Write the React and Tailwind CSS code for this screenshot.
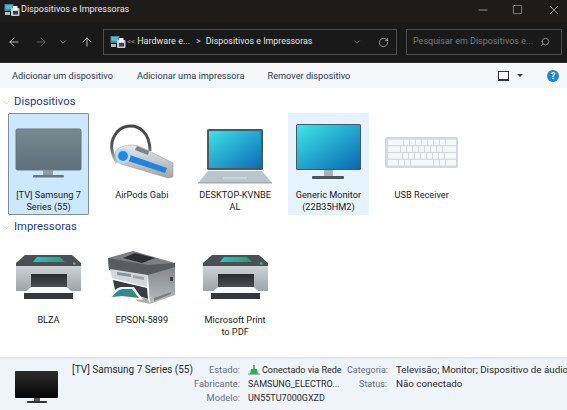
import React from "react";
import { ArrowLeft, ArrowRight, ArrowUp, ChevronDown, RotateCw, Search, Minus, Square, X } from "lucide-react";

const FolderIcon = () => (
  <svg width="16" height="14" viewBox="0 0 16 14" className="shrink-0">
    <rect x="0.5" y="1" width="9" height="7" fill="#5d7f96" />
    <rect x="1.5" y="2" width="7" height="4" fill="#35c4dc" />
    <rect x="7" y="5" width="8.5" height="8" rx="1" fill="#c6ccd2" />
    <rect x="9" y="3" width="4.5" height="4" fill="#f2f4f5" />
    <rect x="9" y="8" width="5" height="3.5" fill="#39424a" />
    <rect x="1" y="9" width="5" height="3" fill="#aeb8bf" />
  </svg>
);

const TvIcon = () => (
  <svg width="79" height="70" viewBox="1 1 79 70">
    <defs>
      <linearGradient id="tvg" x1="0" y1="0" x2="0" y2="1">
        <stop offset="0" stopColor="#7a8991" />
        <stop offset="1" stopColor="#5f707b" />
      </linearGradient>
    </defs>
    <rect x="8" y="16" width="65" height="41" rx="1.5" fill="url(#tvg)" stroke="#66757f" />
    <rect x="35" y="57" width="10" height="5" fill="#8c9aa2" />
    <rect x="25" y="62" width="31" height="2.5" rx="1" fill="#66767f" />
  </svg>
);

const HeadsetIcon = () => (
  <svg width="79" height="70" viewBox="1 1 79 70">
    <defs>
      <linearGradient id="hsb" x1="0" y1="0" x2="0" y2="1">
        <stop offset="0" stopColor="#e8eaec" />
        <stop offset="1" stopColor="#9fa5aa" />
      </linearGradient>
      <linearGradient id="hsa" x1="0" y1="0" x2="0" y2="1">
        <stop offset="0" stopColor="#444444" />
        <stop offset="0.55" stopColor="#555555" />
        <stop offset="1" stopColor="#c8ccd0" />
      </linearGradient>
    </defs>
    <path d="M16 50 C10 40 9 30 14 22 C19 13 33 9 42 18 C47 23 49 30 49 38" fill="none" stroke="url(#hsa)" strokeWidth="3" />
    <path d="M14 42 C14 35 20 33 30 32 C36 32 40 34 44 36 L72 50 L72 64 L67 65 L20 51 C16 49 14 46 14 42 Z" fill="url(#hsb)" stroke="#9aa0a6" strokeWidth="0.6" />
    <path d="M29 42 L66 55 L64 60 L27 48 Z" fill="#1e84e0" />
    <circle cx="22" cy="43" r="7.5" fill="#b9d9f2" />
    <circle cx="22" cy="43" r="5" fill="#1f8ae4" />
    <path d="M36 33 L48 38 L47 42 L34 37 Z" fill="#7d8388" />
  </svg>
);

const LaptopIcon = () => (
  <svg width="79" height="70" viewBox="1 1 79 70">
    <defs>
      <linearGradient id="lpg" x1="0" y1="0" x2="1" y2="1">
        <stop offset="0" stopColor="#3fe0e6" />
        <stop offset="1" stopColor="#0a6cb8" />
      </linearGradient>
    </defs>
    <rect x="12" y="16" width="56" height="41" rx="1.5" fill="#4d5962" />
    <rect x="14" y="18" width="52" height="37" fill="url(#lpg)" />
    <path d="M13 58 H67 L77 70 H3 Z" fill="#bac6ce" />
    <rect x="3" y="69" width="74" height="1.5" fill="#9eabb3" />
    <rect x="28" y="64" width="24" height="2" fill="#cfd7dc" />
  </svg>
);

const MonitorIcon = () => (
  <svg width="79" height="70" viewBox="1 1 79 70">
    <defs>
      <linearGradient id="mng" x1="0" y1="0" x2="1" y2="1">
        <stop offset="0" stopColor="#3fe6e8" />
        <stop offset="1" stopColor="#0867b5" />
      </linearGradient>
    </defs>
    <rect x="8" y="11" width="65" height="46" rx="1.5" fill="#4b5862" />
    <rect x="9" y="12" width="63" height="44" fill="url(#mng)" />
    <rect x="36" y="57" width="9" height="6" fill="#a7b1b7" />
    <rect x="24" y="63" width="32" height="3" rx="1" fill="#4b5862" />
  </svg>
);

const keyRows = [
  [[7, 10], [17, 5], [23, 5], [29, 5], [35, 5], [41, 5], [47, 5], [53, 5], [59, 5], [65, 10]],
  [[7, 12], [20, 5], [26, 5], [32, 5], [38, 5], [44, 5], [50, 5], [56, 5], [62, 13]],
  [[7, 14], [22, 5], [28, 5], [34, 5], [40, 5], [46, 5], [52, 5], [58, 5], [64, 11]],
  [[7, 10], [18, 5], [24, 5], [30, 22], [53, 5], [59, 5], [65, 10]],
];

const KeyboardIcon = () => (
  <svg width="79" height="70" viewBox="1 1 79 70">
    <rect x="4" y="24" width="73" height="31" rx="2" fill="#d3d8dc" />
    {keyRows.map((row, r) =>
      row.map(([x, w]) => <rect key={`${r}-${x}`} x={x} y={26.5 + r * 6.8} width={w} height="5.6" fill="#f6f7f8" />)
    )}
  </svg>
);

const PrinterIcon = ({ id }) => (
  <svg width="79" height="70" viewBox="1 1 79 70">
    <defs>
      <linearGradient id={`${id}b`} x1="0" y1="0" x2="0" y2="1">
        <stop offset="0" stopColor="#cdd3d7" />
        <stop offset="1" stopColor="#9da3a8" />
      </linearGradient>
      <linearGradient id={`${id}t`} x1="0" y1="0" x2="1" y2="0">
        <stop offset="0" stopColor="#2fc4c4" />
        <stop offset="1" stopColor="#2a9a6e" />
      </linearGradient>
      <linearGradient id={`${id}s`} x1="0" y1="0" x2="0" y2="1">
        <stop offset="0" stopColor="#2a2d30" />
        <stop offset="1" stopColor="#4c5055" />
      </linearGradient>
    </defs>
    <path d="M17 17 H64 L73 25 V28 H8 V25 Z" fill="#4a5056" />
    <path d="M29 19 H52 L57 24 H25 Z" fill={`url(#${id}t)`} />
    <rect x="65" y="24.5" width="2.5" height="2" fill="#35d05a" />
    <rect x="8" y="28" width="65" height="25" fill={`url(#${id}b)`} />
    <rect x="23" y="36" width="36" height="14" fill={`url(#${id}s)`} />
    <path d="M23 49 H59 L65 55 H16 Z" fill="#f7f8f9" />
    <rect x="16" y="55" width="49" height="6" fill="#33373b" />
  </svg>
);

const EpsonIcon = () => (
  <svg width="79" height="70" viewBox="1 1 79 70">
    <defs>
      <linearGradient id="epp" x1="0" y1="0" x2="1" y2="1">
        <stop offset="0" stopColor="#2c86c9" />
        <stop offset="1" stopColor="#3f8e4c" />
      </linearGradient>
      <linearGradient id="eps" x1="0" y1="0" x2="0" y2="1">
        <stop offset="0" stopColor="#83888d" />
        <stop offset="1" stopColor="#b9bdc0" />
      </linearGradient>
    </defs>
    {/* top and back */}
    <path d="M7 20 L32 13 L74 25 L74 33 L47 38 L8 32 Z" fill="#7c8085" />
    <path d="M7 20 L47 27 L74 25 L74 33 L47 38 L8 32 Z" fill="#585b60" />
    <path d="M22 20 L34 15 L54 20 L41 25 Z" fill="#2c2e31" />
    {/* right side */}
    <path d="M47 37 L74 29 L74 57 L49 66 Z" fill="url(#eps)" />
    <rect x="69" y="39" width="3" height="4" fill="#3a3e42" />
    <path d="M53 60 L70 54 L70 56 L53 63 Z" fill="#7a7f84" />
    {/* control panel */}
    <path d="M9 31 L47 37 L46 49 L11 40 Z" fill="#d4d8db" />
    <path d="M16 34 L30 36 L30 39 L16 37 Z" fill="#8795a0" />
    <path d="M32 37 L43 39 L43 42 L32 40 Z" fill="#9aa6af" />
    {/* output slot */}
    <path d="M12 42 L46 50 L47 61 L30 55 L14 52 Z" fill="#3a3d41" />
    <path d="M32 57 L47 61 L49 66 L36 63 Z" fill="#a9adb1" />
    {/* photo */}
    <path d="M8 60 C11 54 15 50 20 49 L33 49 L42 62 L20 60 Z" fill="#f4f6f7" />
    <path d="M11 59 C14 55 17 52 21 51 L31 51 L38 60 L21 58 Z" fill="url(#epp)" />
  </svg>
);

const devices = [
  { name: "[TV] Samsung 7\nSeries (55)", icon: <TvIcon />, cls: "bg-[#cce8ff] border-[#7d8f9f]" },
  { name: "AirPods Gabi", icon: <HeadsetIcon />, cls: "border-transparent" },
  { name: "DESKTOP-KVNBE\nAL", icon: <LaptopIcon />, cls: "border-transparent" },
  { name: "Generic Monitor\n(22B35HM2)", icon: <MonitorIcon />, cls: "bg-[#e5f3ff] border-transparent" },
  { name: "USB Receiver", icon: <KeyboardIcon />, cls: "border-transparent" },
];

const printers = [
  { name: "BLZA", icon: <PrinterIcon id="pr1" />, cls: "border-transparent" },
  { name: "EPSON-5899", icon: <EpsonIcon />, cls: "border-transparent" },
  { name: "Microsoft Print\nto PDF", icon: <PrinterIcon id="pr2" />, cls: "border-transparent" },
];

const Tile = ({ item }) => (
  <div className={`w-[81px] h-[102px] border rounded-[1px] flex flex-col items-center ${item.cls}`}>
    <div className="h-[70px] w-[79px] shrink-0">{item.icon}</div>
    <div className="mt-[5px] w-[79px] text-center text-[9.2px] leading-[12px] text-[#1a1a1a] whitespace-pre-line">{item.name}</div>
  </div>
);

const Section = ({ title }) => (
  <div className="h-[16px] flex items-center text-[#1f3a8a]">
    <ChevronDown size={11} strokeWidth={0.9} className="text-[#8a9099]" />
    <span className="ml-[2px] text-[11.3px]">{title}</span>
  </div>
);

const Label = ({ children }) => <div className="text-right text-[#66707d]">{children}</div>;

export default function App() {
  return (
    <div className="w-[567px] h-[410px] flex flex-col overflow-hidden bg-white font-['Roboto','Noto_Sans',sans-serif]">
      {/* title bar */}
      <div className="h-[22px] bg-[#1e1b1b] flex items-center pl-[4px] pb-[3px] text-[#e8e8e8] text-[9px] shrink-0">
        <FolderIcon />
        <span className="ml-[1px]">Dispositivos e Impressoras</span>
        <div className="ml-auto flex items-center pr-[6px] text-[#e8e8e8]">
          <Minus size={14} strokeWidth={1} />
          <Square size={11} strokeWidth={1} className="ml-[22px]" />
          <X size={14} strokeWidth={1} className="ml-[24px]" />
        </div>
      </div>

      {/* nav bar */}
      <div className="h-[41px] bg-[#191919] flex items-center shrink-0 border-b border-[#2c2c2c]">
        <div className="w-[103px] flex items-center text-[#e6e6e6] pl-[7px]">
          <ArrowLeft size={14} strokeWidth={1.3} />
          <ArrowRight size={14} strokeWidth={1.3} className="ml-[13px] text-[#777]" />
          <ChevronDown size={10} strokeWidth={1.5} className="ml-[10px] text-[#ccc]" />
          <ArrowUp size={14} strokeWidth={1.3} className="ml-[12px]" />
        </div>
        <div className="w-[294px] h-[26px] border border-[#4d4d4d] flex items-center pl-[6px] text-[9px] text-[#e4e4e4] shrink-0">
          <FolderIcon />
          <span className="ml-[1px] text-[8px] text-[#999]">{"<<"}</span>
          <span className="ml-[2px]">Hardware e...</span>
          <span className="ml-[6px] text-[#ccc]">{">"}</span>
          <span className="ml-[5px] text-[8.9px]">Dispositivos e Impressoras</span>
          <ChevronDown size={10} strokeWidth={1.2} className="ml-auto mr-[16px] text-[#bbb]" />
          <RotateCw size={11} strokeWidth={1.3} className="mr-[7px] text-[#ddd]" />
        </div>
        <div className="ml-[9px] w-[156px] h-[26px] border border-[#4d4d4d] flex items-center pl-[6px] text-[9px] text-[#7c7c7c] shrink-0">
          <span className="whitespace-nowrap">Pesquisar em Dispositivos e...</span>
          <Search size={10} strokeWidth={1.6} className="ml-auto mr-[11px] text-[#bbb] -scale-x-100" />
        </div>
      </div>

      {/* command bar */}
      <div className="h-[25px] bg-[#f5f6f7] flex items-center pl-[12px] text-[9.2px] text-[#1d3a5f] shrink-0">
        <span>Adicionar um dispositivo</span>
        <span className="ml-[24px]">Adicionar uma impressora</span>
        <span className="ml-[23px]">Remover dispositivo</span>
        <div className="ml-auto flex items-center pr-[8px]">
          <span className="w-[11px] h-[10px] border border-[#333] border-b-2 bg-white" />
          <span className="ml-[8px] w-0 h-0 border-x-[3px] border-x-transparent border-t-[3px] border-t-[#1d3a5f]" />
          <span className="ml-[24px] w-[12px] h-[12px] rounded-full bg-[#1b87e0] text-white text-[9px] font-bold leading-[12px] text-center">?</span>
        </div>
      </div>

      {/* content */}
      <div className="flex-1 bg-white pt-[6px] pl-[1px]">
        <Section title="Dispositivos" />
        <div className="flex gap-x-[12.3px] pl-[7px] mt-[3px]">
          {devices.map((d) => (
            <Tile key={d.name} item={d} />
          ))}
        </div>
        <div className="mt-[4px]">
          <Section title="Impressoras" />
        </div>
        <div className="flex gap-x-[12.3px] pl-[7px] mt-[3px]">
          {printers.map((p) => (
            <Tile key={p.name} item={p} />
          ))}
        </div>
      </div>

      {/* details pane */}
      <div className="h-[53px] bg-[#eff3fa] border-t-2 border-[#e3e7ee] flex text-[10px] text-[#2b2b2b] shrink-0">
        <div className="w-[72px] shrink-0 pl-[15px] pt-[12px]">
          <svg width="43" height="33" viewBox="0 0 43 33">
            <defs>
              <linearGradient id="dtv" x1="0" y1="0" x2="0" y2="1">
                <stop offset="0" stopColor="#2b2b2b" />
                <stop offset="1" stopColor="#050505" />
              </linearGradient>
            </defs>
            <rect x="0" y="0" width="43" height="27" rx="1" fill="url(#dtv)" />
            <rect x="19" y="27" width="6" height="3" fill="#555" />
            <rect x="12" y="30" width="20" height="2" rx="1" fill="#333" />
          </svg>
        </div>
        <div className="w-[120px] shrink-0 pt-[4px] leading-[14px] whitespace-nowrap">[TV] Samsung 7 Series (55)</div>
        <div className="w-[48px] shrink-0 pt-[4px] leading-[14px] text-[9.3px]">
          <Label>Estado:</Label>
          <Label>Fabricante:</Label>
          <Label>Modelo:</Label>
        </div>
        <div className="w-[99px] shrink-0 ml-[8px] pt-[4px] leading-[14px] whitespace-nowrap text-[9px]">
          <div className="flex items-center h-[14px]">
            <svg width="12" height="11" viewBox="0 0 12 11" className="shrink-0">
              <rect x="5" y="0" width="2" height="5" fill="#8a9a8e" />
              <path d="M3 4 H9 L10 9 H2 Z" fill="#19b45a" />
              <rect x="0" y="8.5" width="12" height="1.2" fill="#8a9099" />
            </svg>
            <span className="ml-[2px]">Conectado via Rede</span>
          </div>
          <div>SAMSUNG_ELECTRO...</div>
          <div>UN55TU7000GXZD</div>
        </div>
        <div className="w-[40px] shrink-0 pt-[4px] leading-[14px] text-[9px]">
          <Label>Categoria:</Label>
          <Label>Status:</Label>
        </div>
        <div className="ml-[9px] pt-[4px] leading-[14px] whitespace-nowrap text-[9.8px]">
          <div>Televisão; Monitor; Dispositivo de áudio</div>
          <div>Não conectado</div>
        </div>
      </div>
    </div>
  );
}
